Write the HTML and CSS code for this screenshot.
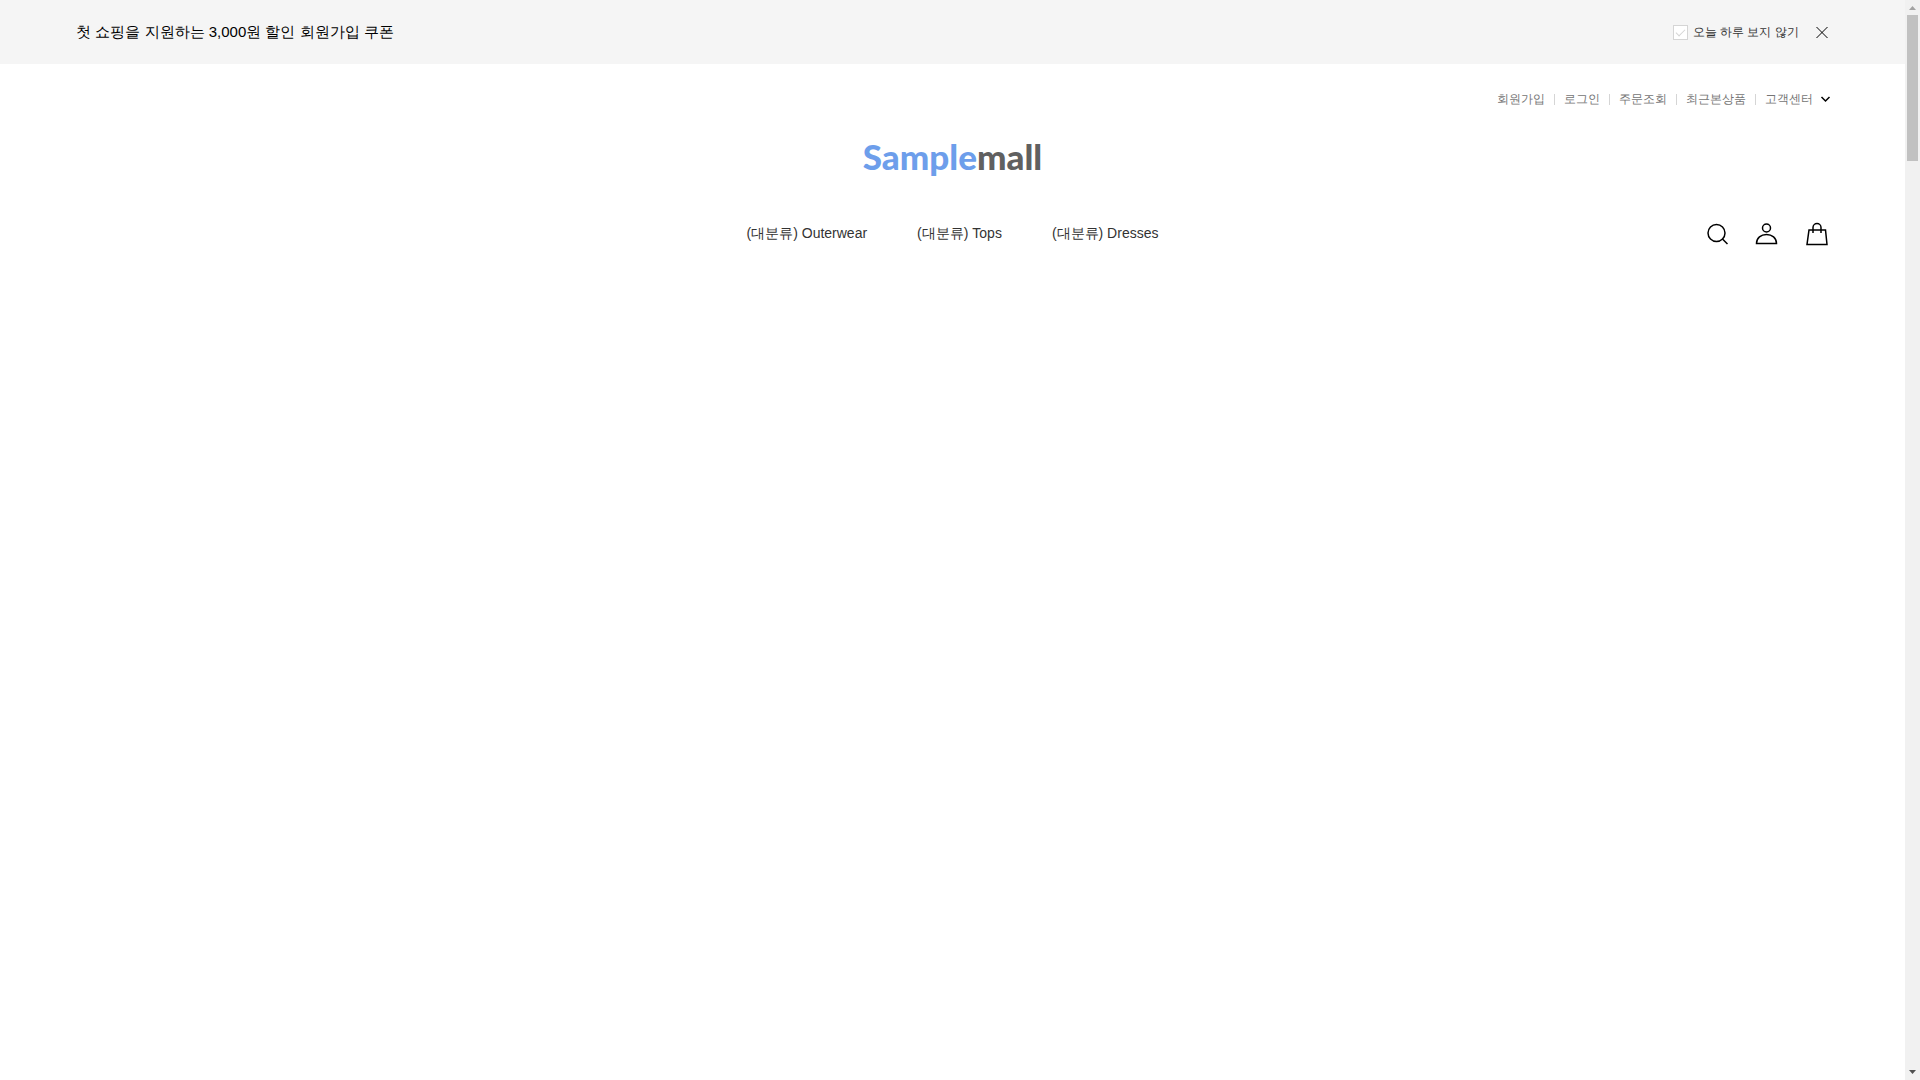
FILE: index.html
```html
<!DOCTYPE html>
<html lang="ko">
<head>
    <meta charset="UTF-8">
    <meta name="viewport" content="width=device-width, initial-scale=1.0">

    <title>Samplemall</title>
    <link rel="stylesheet" href="styles.css">
</head>
<body>
    <div class="page">
        <!-- top banner -->
        <div class="banner">
            <a href="#" class="banner-text">첫 쇼핑을 지원하는 3,000원 할인 회원가입 쿠폰</a>
            <div class="banner-close">
                <label class="today"><input type="checkbox" class="today-check">오늘 하루 보지 않기</label>
                <button type="button" class="close" aria-label="닫기">
                    <svg width="12" height="12" viewBox="0 0 12 12"><path d="M.5 1l11 11M11.5 1l-11 11"/></svg>
                </button>
            </div>
        </div>

        <header class="header">
            <ul class="util">
                <li><a href="#">회원가입</a></li>
                <li><a href="#">로그인</a></li>
                <li><a href="#">주문조회</a></li>
                <li><a href="#">최근본상품</a></li>
                <li>
                    <a href="#">고객센터
                        <svg width="8" height="6" viewBox="0 0 8 6"><path d="M.5 1l4 4 4-4"/></svg>
                    </a>
                </li>
            </ul>

            <h1 class="logo"><a href="#">Sample<span>mall</span></a></h1>

            <div class="menu">
                <nav class="category">
                    <a href="#">(대분류) Outerwear</a>
                    <a href="#">(대분류) Tops</a>
                    <a href="#">(대분류) Dresses</a>
                </nav>
                <div class="icons">
                    <button type="button" aria-label="검색">
                        <svg width="24" height="24" viewBox="0 0 24 24"><circle cx="11.5" cy="11" r="8.5"/><path d="M17.500 17l5 5"/></svg>
                    </button>
                    <a href="#" aria-label="마이페이지">
                        <svg width="24" height="24" viewBox="0 0 24 24"><circle cx="11.5" cy="6" r="4"/><path d="M1.500 21.500C1.500 16 6 12.500 11.500 12.500S21.500 16 21.500 21.500z"/></svg>
                    </a>
                    <a href="#" aria-label="장바구니">
                        <svg width="24" height="24" viewBox="0 0 24 24"><path d="M4 8h16.500l1.500 14.500H2z"/><path d="M8 11V5.500a4 4 0 0 1 8 0V11"/></svg>
                    </a>
                </div>
            </div>
        </header>
    </div>

    <!-- scroll bar -->
    <div class="scroll" aria-hidden="true">
        <svg width="15" height="15" viewBox="0 0 15 15"><path d="M4 10h7l-3.500-4z" fill="#a3a3a3"/></svg>
        <div class="thumb"></div>
        <svg width="15" height="15" viewBox="0 0 15 15"><path d="M4 5h7l-3.500 4z" fill="#505050"/></svg>
    </div>
</body>
</html>
```
FILE: styles.css
```css
* {
    box-sizing: border-box;
}
body {
    display: flex;
    min-height: 100vh;
    margin: 0;
    background-color: #fff;
    color: #333;
    font-family: "Liberation Sans", sans-serif;
    font-size: 12px;
    line-height: 18px;
}
a {
    color: inherit;
    text-decoration: none;
}
button {
    padding: 0;
    border: 0;
    background: none;
    cursor: pointer;
}
svg {
    display: block;
    overflow: visible;
    fill: none;
    stroke: #000;
}
.page {
    flex: 1;
}

/* banner */
.banner {
    display: flex;
    align-items: center;
    justify-content: space-between;
    height: 64px;
    padding: 0 4%;
    background-color: #f5f5f5;
}
.banner-text {
    color: #000;
    font-size: 15px;
}
.banner-close {
    display: flex;
    align-items: center;
    gap: 17px;
}
.today {
    display: flex;
    align-items: center;
    gap: 5px;
}
.today-check {
    appearance: none;
    width: 15px;
    height: 15px;
    margin: 0;
    border: 1px solid #d5d5d5;
    background-color: #fff;
}
.today-check::before {
    content: "";
    display: block;
    width: 8px;
    height: 4px;
    margin: 3px 2px;
    border-left: 1px solid #d5d5d5;
    border-bottom: 1px solid #d5d5d5;
    transform: rotate(-45deg);
}
.close {
    padding-right: 1px;
}

/* header */
.header {
    padding: 26px 4% 0;
}
.util {
    display: flex;
    justify-content: flex-end;
    margin: 0;
    padding: 0;
    color: #757575;
    list-style: none;
}
.util li {
    display: flex;
    align-items: center;
}
.util li + li::before {
    content: "";
    width: 1px;
    height: 11px;
    margin: 0 9px;
    background-color: #d5d5d5;
}
.util a {
    display: flex;
    align-items: center;
    gap: 8px;
}
.util svg {
    stroke-width: 1.5;
}
.logo {
    margin: 28px 0 0;
    color: #6d9eeb;
    font-family: Lato, sans-serif;
    font-size: 35px;
    font-weight: 900;
    line-height: 40px;
    text-align: center;
}
.logo span {
    color: #606060;
}
.menu {
    display: grid;
    grid-template-columns: 1fr auto 1fr;
    align-items: start;
    margin-top: 46px;
}
.category {
    display: flex;
    grid-column: 2;
    gap: 50px;
    font-size: 14px;
    line-height: 22px;
}
.icons {
    display: flex;
    justify-content: flex-end;
    gap: 26px;
}
.icons svg {
    stroke-width: 1.5;
}

/* scroll bar */
.scroll {
    display: flex;
    flex-direction: column;
    width: 15px;
    background-color: #f1f1f1;
}
.scroll svg {
    stroke: none;
}
.thumb {
    height: 146px;
    margin: 0 2px auto;
    background-color: #c1c1c1;
}
```
